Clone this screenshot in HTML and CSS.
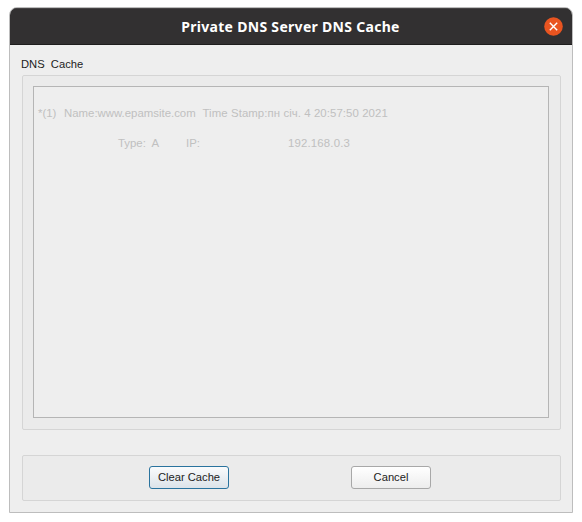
FILE: index.html
```html
<!DOCTYPE html>
<html lang="en">
<head>
<meta charset="utf-8">
<title>Private DNS Server DNS Cache</title>
<link rel="stylesheet" href="styles.css">
</head>
<body>
<main class="window">
  <header class="titlebar">
    <h1 class="title">Private DNS Server DNS Cache</h1>
    <button class="close" aria-label="Close"><svg width="19" height="19" viewBox="0 0 19 19"><circle cx="9.5" cy="9.5" r="9.3" fill="#e95420"/><path d="M5.8 5.8l7.4 7.4M13.2 5.8l-7.4 7.4" stroke="#fff" stroke-width="1.4"/></svg></button>
  </header>
  <div class="content">
    <div class="label">DNS&nbsp; Cache</div>
    <section class="panel cache">
      <div class="list">
        <div class="row"><span class="index">*(1)</span><span class="name">Name:www.epamsite.com</span><span class="stamp">Time Stamp:пн січ. 4 20:57:50 2021</span></div>
        <div class="row record"><span class="type">Type:&nbsp; A</span><span class="ip">IP:</span><span class="address">192.168.0.3</span></div>
      </div>
    </section>
    <footer class="panel actions">
      <button class="btn primary">Clear Cache</button>
      <button class="btn">Cancel</button>
    </footer>
  </div>
</main>
</body>
</html>
```
FILE: styles.css
```css
* { box-sizing: border-box; }
body {
  margin: 0;
  padding: 7px 9px 9px;
  background: #fff;
  font: 11.2px/14px "Liberation Sans", sans-serif;
  color: #222;
}
.window {
  width: 564px;
  height: 506px;
  border: 1px solid #bdbdbd;
  border-radius: 8px 8px 0 0;
  background: #eee;
  overflow: hidden;
}
.titlebar {
  height: 37px;
  display: grid;
  grid-template-columns: 1fr auto 1fr;
  align-items: center;
  background: #323031;
  border-top: 1px solid #454344;
  border-bottom: 1px solid #1e1d1d;
}
.title {
  grid-column: 2;
  margin: 0 1px 0 0;
  color: #fff;
  font: bold 14px/20px "Noto Sans", sans-serif;
  letter-spacing: 0.3px;
  white-space: nowrap;
}
.close {
  justify-self: end;
  width: 19px;
  height: 19px;
  margin: 0 9px 1px 0;
  padding: 0;
  border: 0;
  background: none;
}
.close svg { display: block; }
.content { padding: 12px 11px 0 12px; }
.label { height: 18px; margin-left: -1px; }
.panel {
  border: 1px solid #d5d5d5;
  border-radius: 2px;
  background: #ebebeb;
}
.cache { height: 355px; padding: 10px 11px 11px 10px; }
.list {
  height: 332px;
  padding: 19px 4px 0;
  border: 1px solid #b5b5b5;
  background: #eee;
  color: #c0c0c0;
  font-size: 11.4px;
}
.row { display: flex; height: 30px; white-space: nowrap; }
.index { width: 26px; }
.name { width: 138.5px; }
.stamp { letter-spacing: 0.08px; }
.record { padding-left: 80px; }
.type { width: 68px; }
.ip { width: 102px; }
.address { letter-spacing: 0.17px; }
.actions {
  height: 46px;
  margin-top: 25px;
  padding: 10px 0 0 126px;
  display: flex;
  gap: 122px;
}
.btn {
  width: 80px;
  height: 23px;
  padding: 0 0 2px;
  border: 1px solid #a8a8a8;
  border-radius: 3px;
  background: linear-gradient(#fff, #ededed);
  font: inherit;
  color: #222;
}
.primary {
  border-color: #2a739e;
  background: linear-gradient(#fafbfc, #dce3e9);
}
```
